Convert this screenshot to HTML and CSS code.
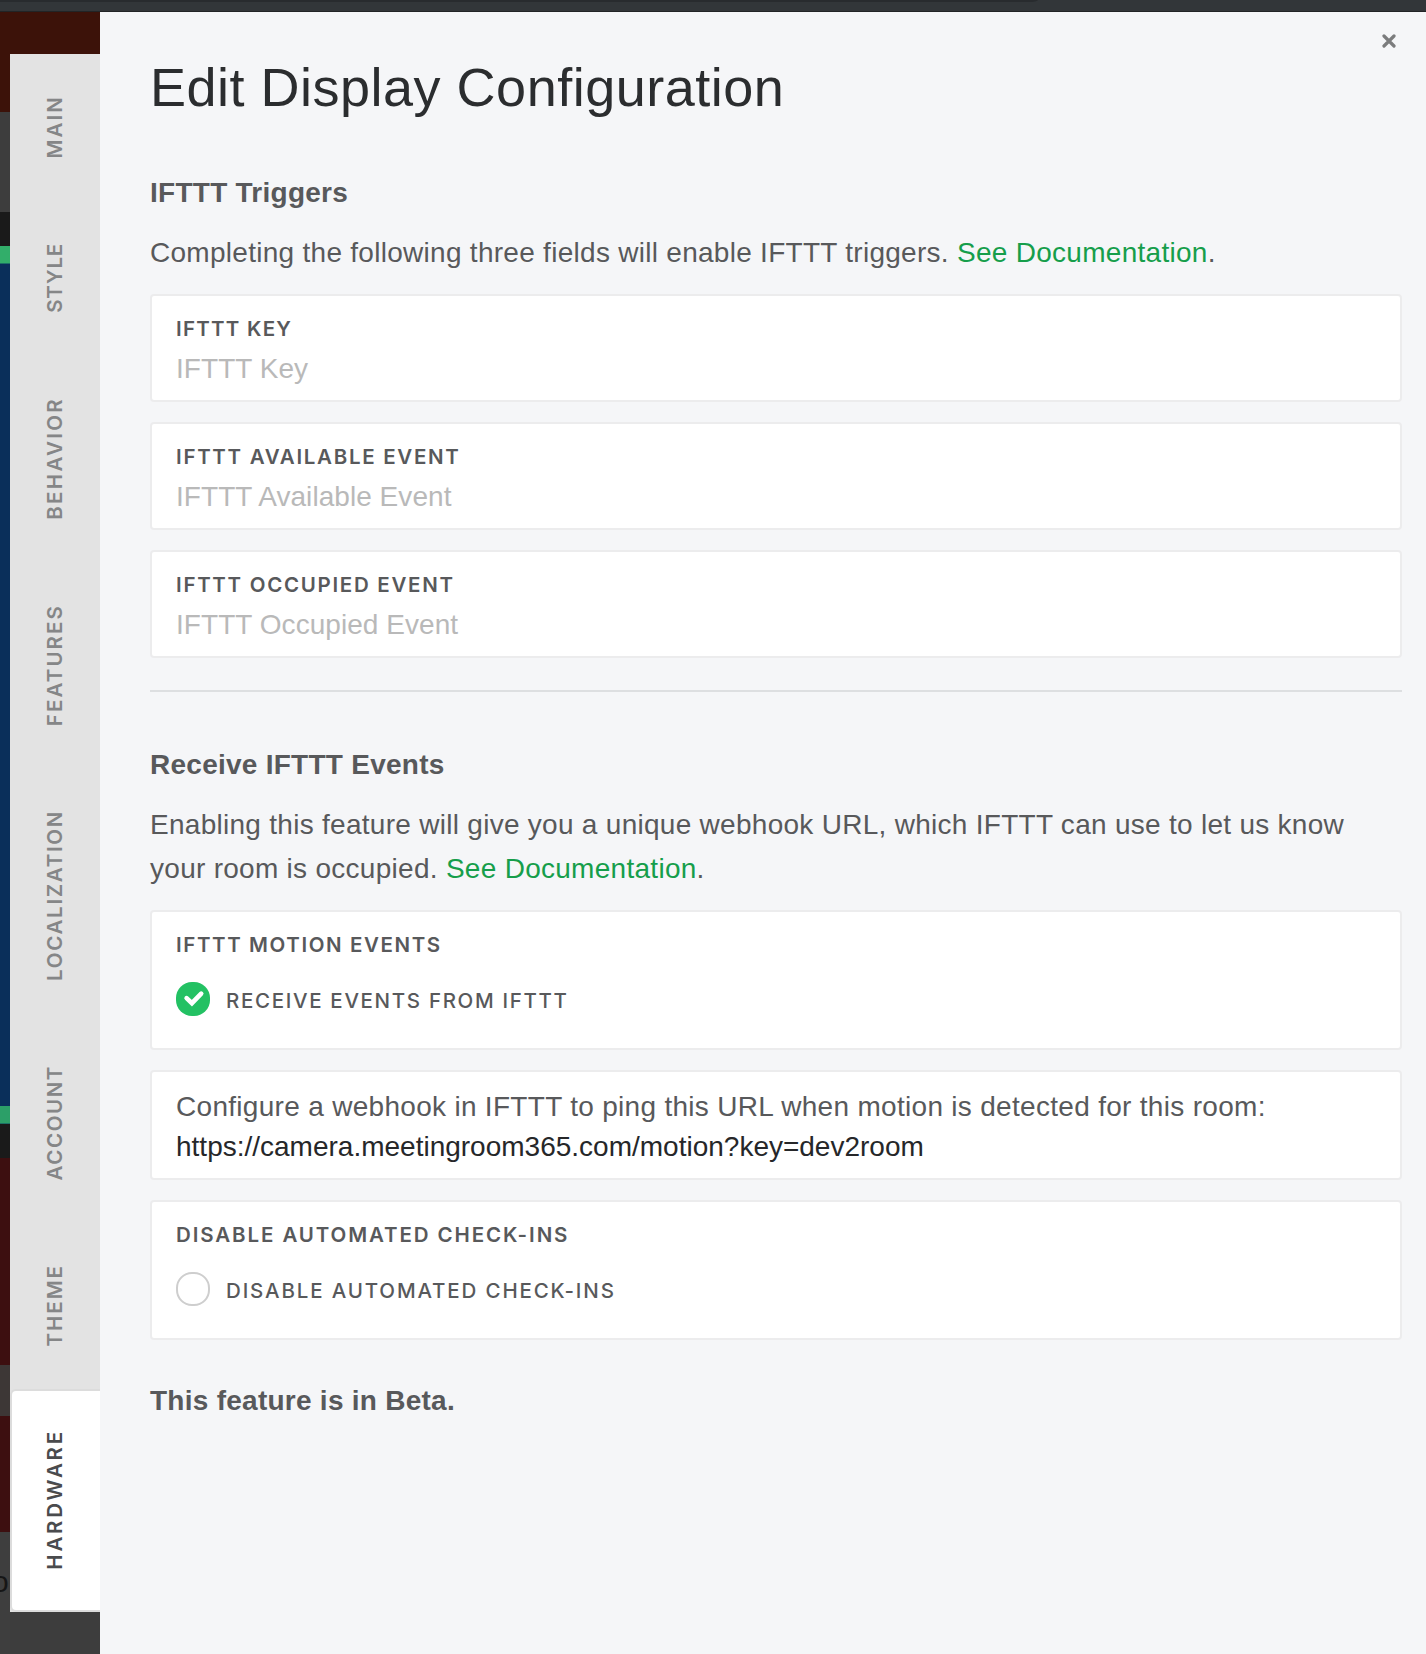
FILE: index.html
```html
<!DOCTYPE html>
<html lang="en">
<head>
<meta charset="utf-8">
<title>Edit Display Configuration</title>
<link rel="stylesheet" href="styles.css">
</head>
<body>
<div class="browser-bar"><div class="address"></div></div>
<div class="page">
  <div class="backdrop">
    <div class="band maroon"></div>
    <div class="band gray"></div>
    <div class="band black"></div>
    <div class="band green"></div>
    <div class="band blue"></div>
    <div class="band green low"></div>
    <div class="band black"></div>
    <div class="band wine"></div>
    <div class="band taupe"></div>
    <div class="band wine low"></div>
    <div class="band foot"><span class="peek">o</span></div>
  </div>
  <nav class="tabs">
    <a class="tab main"><span>MAIN</span></a>
    <a class="tab style"><span>STYLE</span></a>
    <a class="tab behavior"><span>BEHAVIOR</span></a>
    <a class="tab features"><span>FEATURES</span></a>
    <a class="tab localization"><span>LOCALIZATION</span></a>
    <a class="tab account"><span>ACCOUNT</span></a>
    <a class="tab theme"><span>THEME</span></a>
    <a class="tab hardware active"><span>HARDWARE</span></a>
  </nav>
  <main class="panel">
    <svg class="close" viewBox="0 0 14 14"><path d="M2 2L12 12M12 2L2 12" fill="none" stroke="#7b7c7d" stroke-width="3.2" stroke-linecap="round"/></svg>
    <h1>Edit Display Configuration</h1>

    <h2>IFTTT Triggers</h2>
    <p class="intro">Completing the following three fields will enable IFTTT triggers. <a class="link">See Documentation</a>.</p>
    <div class="cards">
      <div class="card field"><div class="label key">IFTTT KEY</div><div class="placeholder">IFTTT Key</div></div>
      <div class="card field"><div class="label">IFTTT AVAILABLE EVENT</div><div class="placeholder">IFTTT Available Event</div></div>
      <div class="card field"><div class="label">IFTTT OCCUPIED EVENT</div><div class="placeholder">IFTTT Occupied Event</div></div>
    </div>
    <hr>

    <h2>Receive IFTTT Events</h2>
    <p class="intro">Enabling this feature will give you a unique webhook URL, which IFTTT can use to let us know your room is occupied. <a class="link">See Documentation</a>.</p>
    <div class="cards">
      <div class="card toggle">
        <div class="label motion">IFTTT MOTION EVENTS</div>
        <div class="option">
          <div class="check on"><svg viewBox="0 0 34 34"><path d="M10.6 16.2L15.9 21.2L25.2 11.6" fill="none" stroke="#fff" stroke-width="4.6" stroke-linecap="round"/></svg></div>
          <span class="option-text">RECEIVE EVENTS FROM IFTTT</span>
        </div>
      </div>
      <div class="card info">
        <div class="note">Configure a webhook in IFTTT to ping this URL when motion is detected for this room:</div>
        <div class="url">https://camera.meetingroom365.com/motion?key=dev2room</div>
      </div>
      <div class="card toggle">
        <div class="label checkins">DISABLE AUTOMATED CHECK-INS</div>
        <div class="option">
          <div class="check"></div>
          <span class="option-text wide">DISABLE AUTOMATED CHECK-INS</span>
        </div>
      </div>
    </div>
    <h2 class="beta">This feature is in Beta.</h2>
  </main>
</div>
</body>
</html>
```

FILE: styles.css
```css
* { box-sizing: border-box; }
body {
  margin: 0;
  height: 1654px;
  overflow: hidden;
  font-family: "Liberation Sans", Arial, sans-serif;
  font-size: 28px;
  color: #58595b;
  background: #3d3d3d;
}
.browser-bar { height: 12px; background: #323639; border-bottom: 1px solid #222426; }
.address { width: 1038px; height: 2px; background: #282b2e; border-bottom-right-radius: 10px 2px; }
.page {
  display: flex;
  height: 1642px;
  background: linear-gradient(90deg, #3c1209 100px, transparent 100px) 0 0 / 100% 100px no-repeat, #3d3d3d;
}

.backdrop { width: 10px; flex: none; overflow: hidden; }
.maroon { height: 100px; background: #3c1209; }
.gray { height: 100px; background: #3d3d3d; }
.black { height: 34px; background: #1a1a1a; }
.green { height: 18px; background: #32ae6a; border-bottom: 1px solid #1c7166; }
.blue { height: 842px; background: #0a2f5a; }
.green.low { background: #2c9f68; }
.wine { height: 207px; background: #3d0f10; }
.taupe { height: 51px; background: #3d3736; }
.wine.low { height: 116px; }
.foot { height: 122px; padding-top: 34px; background: #3e3e3e; }
.peek { display: block; margin-left: -8px; font-size: 30px; line-height: 32px; color: #161616; }

.tabs {
  width: 90px;
  height: 1558px;
  flex: none;
  margin-top: 42px;
  background: #e3e3e3;
}
.tab {
  display: flex;
  align-items: center;
  justify-content: center;
  padding: 0 1px 2px 0;
  color: #858687;
  font: 600 20.5px/26px Inter, sans-serif;
}
.tab span { writing-mode: vertical-rl; transform: rotate(180deg); }
.main { height: 147px; letter-spacing: 2.1px; }
.style { height: 155px; letter-spacing: .8px; }
.behavior { height: 207px; letter-spacing: 2.3px; }
.features { height: 206px; letter-spacing: 2.1px; }
.localization { height: 255px; letter-spacing: 1.7px; }
.account { height: 199px; letter-spacing: 1.6px; }
.theme { height: 166px; letter-spacing: 2px; }
.hardware { height: 223px; letter-spacing: 2.8px; }
.tab.active {
  color: #4a4b4d;
  background: #fff;
  border: 2px solid #dcdcdc;
  border-right: 0;
  border-radius: 6px 0 0 6px;
  padding-right: 3px;
}

.panel {
  position: relative;
  flex: 1;
  padding: 43px 24px 0 50px;
  background: #f5f6f8;
}
.close { position: absolute; top: 22px; right: 30px; width: 14px; height: 14px; }
h1 {
  margin: 0 0 52px;
  font-size: 54px;
  font-weight: 400;
  line-height: 64px;
  letter-spacing: .5px;
  color: #2b2d2f;
}
h2 { margin: 0 0 16px; font-size: 28px; line-height: 44px; letter-spacing: .26px; }
.intro { margin: 0 0 19px; line-height: 44px; letter-spacing: .28px; }
.link { color: #169e4b; }
.cards { display: flex; flex-direction: column; gap: 20px; }
.card { padding: 20px 24px 0; background: #fff; border: 2px solid #ececed; border-radius: 4px; }
.field { height: 108px; }
.toggle { height: 140px; }
.label { font: 600 20.5px/25px Inter, sans-serif; letter-spacing: 1.7px; }
.label.key { letter-spacing: 1.25px; }
.label.motion { letter-spacing: 1.6px; }
.label.checkins { letter-spacing: 1.9px; }
.placeholder { margin-top: 12px; line-height: 32px; letter-spacing: .05px; color: #b9b9b9; }
hr { height: 2px; margin: 32px 0 51px; border: 0; background: #dddfe1; }
.option { display: flex; align-items: center; gap: 16px; margin-top: 25px; }
.check { width: 34px; height: 34px; border: 2px solid #cecece; border-radius: 16px; }
.check.on { border: 0; background: #23c163; }
.check svg { display: block; }
.option-text { padding-top: 4px; font: 500 20.5px/26px Inter, sans-serif; letter-spacing: 1.67px; }
.option-text.wide { letter-spacing: 1.85px; }
.info { height: 110px; padding-top: 15px; line-height: 40px; }
.note { letter-spacing: .3px; }
.url { color: #262729; }
.beta { margin-top: 39px; }
```
